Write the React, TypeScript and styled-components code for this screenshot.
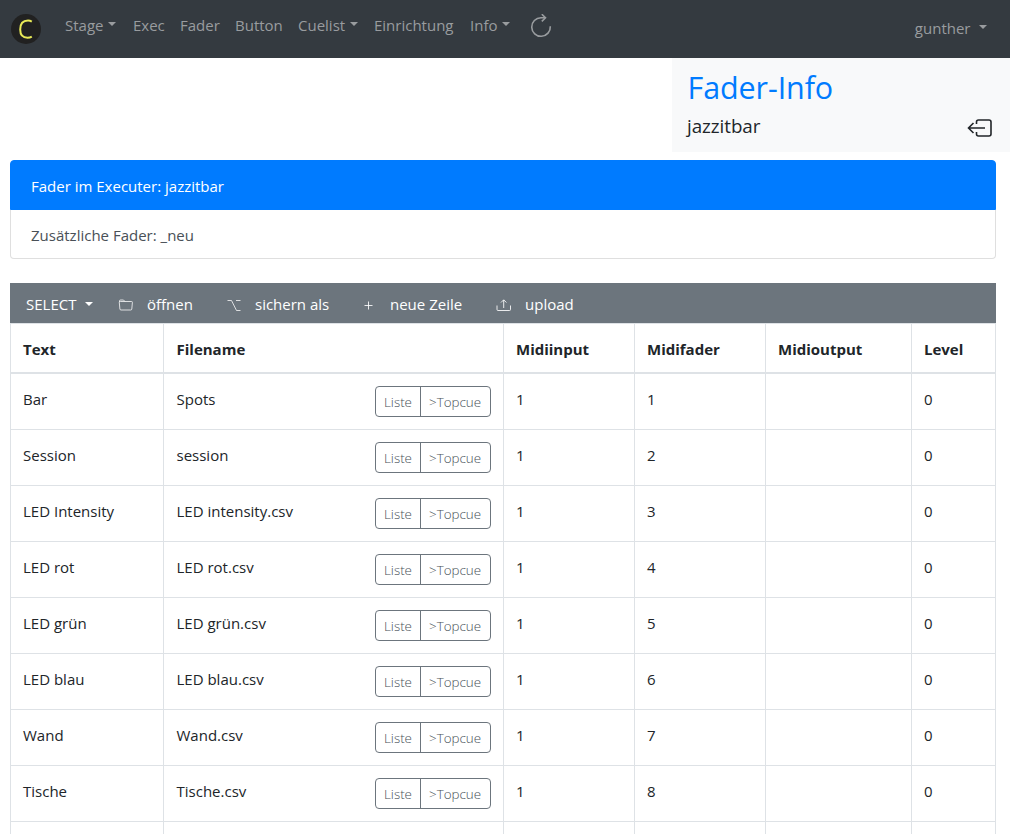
import React from "react";
import styled, { createGlobalStyle } from "styled-components";

const GlobalStyle = createGlobalStyle`
  * { box-sizing: border-box; }
  body { margin: 0; background: #fff; overflow: hidden; height: 834px; }
`;

const Page = styled.div`
  width: 1010px;
  height: 834px;
  overflow: hidden;
  font-family: "Open Sans", "Noto Sans", sans-serif;
  font-size: 15px;
  line-height: 24px;
  color: #212529;
`;

const Navbar = styled.nav`
  height: 58px;
  background: #343a40;
  display: flex;
  align-items: flex-start;
  padding: 13px 22px 0 11px;
  color: #999c9f;
`;

const Logo = styled.svg`
  display: block;
  margin: 1px 24px 0 0;
`;

const Label = styled.span`
  white-space: nowrap;
`;

const NavItem = styled.a<{ $w: number }>`
  display: flex;
  align-items: center;
  width: ${(p) => p.$w}px;
  height: 24px;
  white-space: nowrap;
`;

const Caret = styled.span<{ $gap?: number; $drop?: number }>`
  width: 0;
  height: 0;
  margin-left: ${(p) => p.$gap ?? 5}px;
  margin-top: ${(p) => p.$drop ?? -2}px;
  border: 4.5px solid transparent;
  border-top-color: currentColor;
  border-bottom: 0;
`;

const ReloadIcon = styled.svg`
  display: block;
  margin: 1px 0 0 3px;
`;

const UserMenu = styled.a`
  display: flex;
  align-items: center;
  height: 24px;
  margin: 3px 1px 0 auto;
`;

const InfoPanel = styled.header`
  width: 338px;
  height: 94px;
  margin-left: auto;
  background: #f8f9fa;
  padding: 9px 17px 0 15px;
`;

const Title = styled.h1`
  margin: 0;
  padding-left: 0.5px;
  font-size: 30.5px;
  line-height: 40px;
  font-weight: 400;
  letter-spacing: -0.1px;
  color: #007bff;
`;

const Subtitle = styled.div`
  display: flex;
  justify-content: space-between;
  align-items: center;
  height: 38px;
  font-size: 18.8px;
  letter-spacing: -0.05px;
  svg { margin-top: 4px; }
`;

const ListGroup = styled.ul`
  list-style: none;
  width: 986px;
  margin: 8px 0 24px 10px;
  padding: 0;
`;

const ListItem = styled.li<{ $active?: boolean }>`
  height: ${(p) => (p.$active ? 50 : 49)}px;
  padding: 13px 20px;
  border: 1px solid ${(p) => (p.$active ? "#007bff" : "#dfdfdf")};
  background: ${(p) => (p.$active ? "#007bff" : "#fff")};
  color: ${(p) => (p.$active ? "#fff" : "#495057")};
  border-top-width: ${(p) => (p.$active ? 1 : 0)}px;
  border-radius: ${(p) => (p.$active ? "4px 4px 0 0" : "0 0 4px 4px")};
`;

const Toolbar = styled.div`
  display: flex;
  align-items: center;
  width: 986px;
  height: 40px;
  margin-left: 10px;
  padding: 1px 16px 0;
  background: #6c757d;
  color: #fff;
`;

const ToolItem = styled.a<{ $w: number; $iconSpace?: number }>`
  display: flex;
  align-items: center;
  width: ${(p) => p.$w}px;
  white-space: nowrap;
  svg { margin: 2px ${(p) => p.$iconSpace ?? 0}px 0 0; flex: none; }
`;

const Table = styled.table`
  table-layout: fixed;
  width: 986px;
  margin-left: 10px;
  border-collapse: separate;
  border-spacing: 0;
`;

const HeadCell = styled.th`
  height: 51px;
  padding: 2px 12px 0;
  text-align: left;
  font-weight: 700;
  border: solid #dee2e6;
  border-width: 1px 1px 2px 0;
  &:first-child { border-left-width: 1px; }
  &:nth-child(2) { padding-left: 12.5px; }
`;

const Cell = styled.td`
  height: 56px;
  padding: 13px 12px 0;
  vertical-align: top;
  border: solid #dee2e6;
  border-width: 0 1px 1px 0;
  &:first-child { border-left-width: 1px; }
  &:nth-child(2) { padding-left: 12.5px; }
`;

const FileRow = styled.div`
  display: flex;
  justify-content: space-between;
`;

const ButtonGroup = styled.div`
  display: flex;
  width: 116px;
  height: 31px;
  margin-top: -1px;
  border: 1px solid #6c757d;
  border-radius: 4px;
`;

const SmallButton = styled.button<{ $w: number }>`
  width: ${(p) => p.$w}px;
  padding: 3px 0 2px 8px;
  text-align: left;
  white-space: nowrap;
  border: 0;
  background: none;
  font: 300 13.4px/24px "Open Sans", "Noto Sans", sans-serif;
  color: #485158;
  & + & { border-left: 1px solid #6c757d; }
`;

const rows = [
  ["Bar", "Spots"],
  ["Session", "session"],
  ["LED Intensity", "LED intensity.csv"],
  ["LED rot", "LED rot.csv"],
  ["LED grün", "LED grün.csv"],
  ["LED blau", "LED blau.csv"],
  ["Wand", "Wand.csv"],
  ["Tische", "Tische.csv"],
  ["", ""],
];

const columns: [string, number][] = [
  ["Text", 154],
  ["Filename", 340],
  ["Midiinput", 131],
  ["Midifader", 131],
  ["Midioutput", 146],
  ["Level", 84],
];

export default function App() {
  return (
    <Page>
      <GlobalStyle />
      <Navbar>
        <Logo width="30" height="30" viewBox="0 0 30 30">
          <circle cx="15" cy="15" r="15" fill="#212121" />
          <path d="M20.800 7.600C19.500 6.800 18.300 6.500 17 6.500C12 6.500 9.200 10 9.200 15.500C9.200 20.800 12 23.700 16.500 23.700C18.300 23.700 19.600 23.300 20.800 22.600" fill="none" stroke="#e8ea58" strokeWidth="2" />
        </Logo>
        <NavItem $w={68}><Label>Stage</Label><Caret /></NavItem>
        <NavItem $w={47}><Label>Exec</Label></NavItem>
        <NavItem $w={55}><Label>Fader</Label></NavItem>
        <NavItem $w={63}><Label>Button</Label></NavItem>
        <NavItem $w={76}><Label>Cuelist</Label><Caret /></NavItem>
        <NavItem $w={96}><Label>Einrichtung</Label></NavItem>
        <NavItem $w={56}><Label>Info</Label><Caret /></NavItem>
        <ReloadIcon width="24" height="24" viewBox="0 0 24 24" fill="none" stroke="currentColor" strokeWidth="1.6">
          <path d="M21.300 12.300A9.300 9.300 0 1 1 12 3.700H16" />
          <path d="M12.800 0.200L16.500 3.800L12.800 7.400" />
        </ReloadIcon>
        <UserMenu><Label>gunther</Label><Caret $gap={8.5} $drop={-2} /></UserMenu>
      </Navbar>
      <InfoPanel>
        <Title>Fader-Info</Title>
        <Subtitle>
          <Label>jazzitbar</Label>
          <svg width="26" height="20" viewBox="0 0 26 20" fill="none" stroke="#212529" strokeWidth="1.6">
            <path d="M9.500 6V4Q9.500 2 11.500 2H22Q24 2 24 4V16Q24 18 22 18H11.500Q9.500 18 9.500 16V14M18 10H1.500M6.500 5L1.500 10L6.500 15" />
          </svg>
        </Subtitle>
      </InfoPanel>
      <ListGroup>
        <ListItem $active><Label>Fader im Executer: jazzitbar</Label></ListItem>
        <ListItem><Label>Zusätzliche Fader: _neu</Label></ListItem>
      </ListGroup>
      <Toolbar>
        <ToolItem $w={92}><Label>SELECT</Label><Caret $gap={9} $drop={0} /></ToolItem>
        <ToolItem $w={109} $iconSpace={13}>
          <svg width="16" height="16" viewBox="0 0 16 16" fill="none" stroke="#fff" strokeOpacity=".85" strokeWidth=".9">
            <path d="M1.500 5V4Q1.500 3 2.500 3H5.500L7 4.500H13.500Q14.500 4.500 14.400 5.500L13.800 12Q13.700 13 12.700 13H3Q2 13 1.900 12L1.300 5.500Q1.300 4.500 2.300 4.500H7" />
          </svg>
          <Label>öffnen</Label>
        </ToolItem>
        <ToolItem $w={134} $iconSpace={12}>
          <svg width="16" height="16" viewBox="0 0 16 16" fill="none" stroke="#fff" strokeOpacity=".85" strokeWidth=".9">
            <path d="M0.500 3.500H4.500L9.500 13.500H13.500M9 3.500H13.500" />
          </svg>
          <Label>sichern als</Label>
        </ToolItem>
        <ToolItem $w={135} $iconSpace={13}>
          <svg width="16" height="16" viewBox="0 0 16 16" fill="none" stroke="#fff" strokeOpacity=".85" strokeWidth="1"><path d="M7.500 4.500V12.500M3.500 8.500H11.500" /></svg>
          <Label>neue Zeile</Label>
        </ToolItem>
        <ToolItem $w={90} $iconSpace={13}>
          <svg width="16" height="16" viewBox="0 0 16 16" fill="none" stroke="#fff" strokeOpacity=".85" strokeWidth="1"><path d="M1 8.500V12.500Q1 13.500 2 13.500H13.500Q14.500 13.500 14.500 12.500V8.500M7.700 11V3M5 5.500L7.700 2.800L10.400 5.500" /></svg>
          <Label>upload</Label>
        </ToolItem>
      </Toolbar>
      <Table>
        <colgroup>{columns.map(([n, w]) => <col key={n} width={w} />)}</colgroup>
        <thead><tr>{columns.map(([n]) => <HeadCell key={n}>{n}</HeadCell>)}</tr></thead>
        <tbody>
          {rows.map(([text, file], i) => (
            <Row key={i} text={text} file={file} index={i + 1} />
          ))}
        </tbody>
      </Table>
    </Page>
  );
}

function Row({ text, file, index }: { text: string; file: string; index: number }) {
  if (!text) return <tr>{columns.map(([n]) => <Cell key={n} />)}</tr>;
  return (
    <tr>
      <Cell>{text}</Cell>
      <Cell>
        <FileRow>
          <Label>{file}</Label>
          <ButtonGroup>
            <SmallButton $w={44}>Liste</SmallButton>
            <SmallButton $w={70}>&gt;Topcue</SmallButton>
          </ButtonGroup>
        </FileRow>
      </Cell>
      <Cell>1</Cell>
      <Cell>{index}</Cell>
      <Cell />
      <Cell>0</Cell>
    </tr>
  );
}
